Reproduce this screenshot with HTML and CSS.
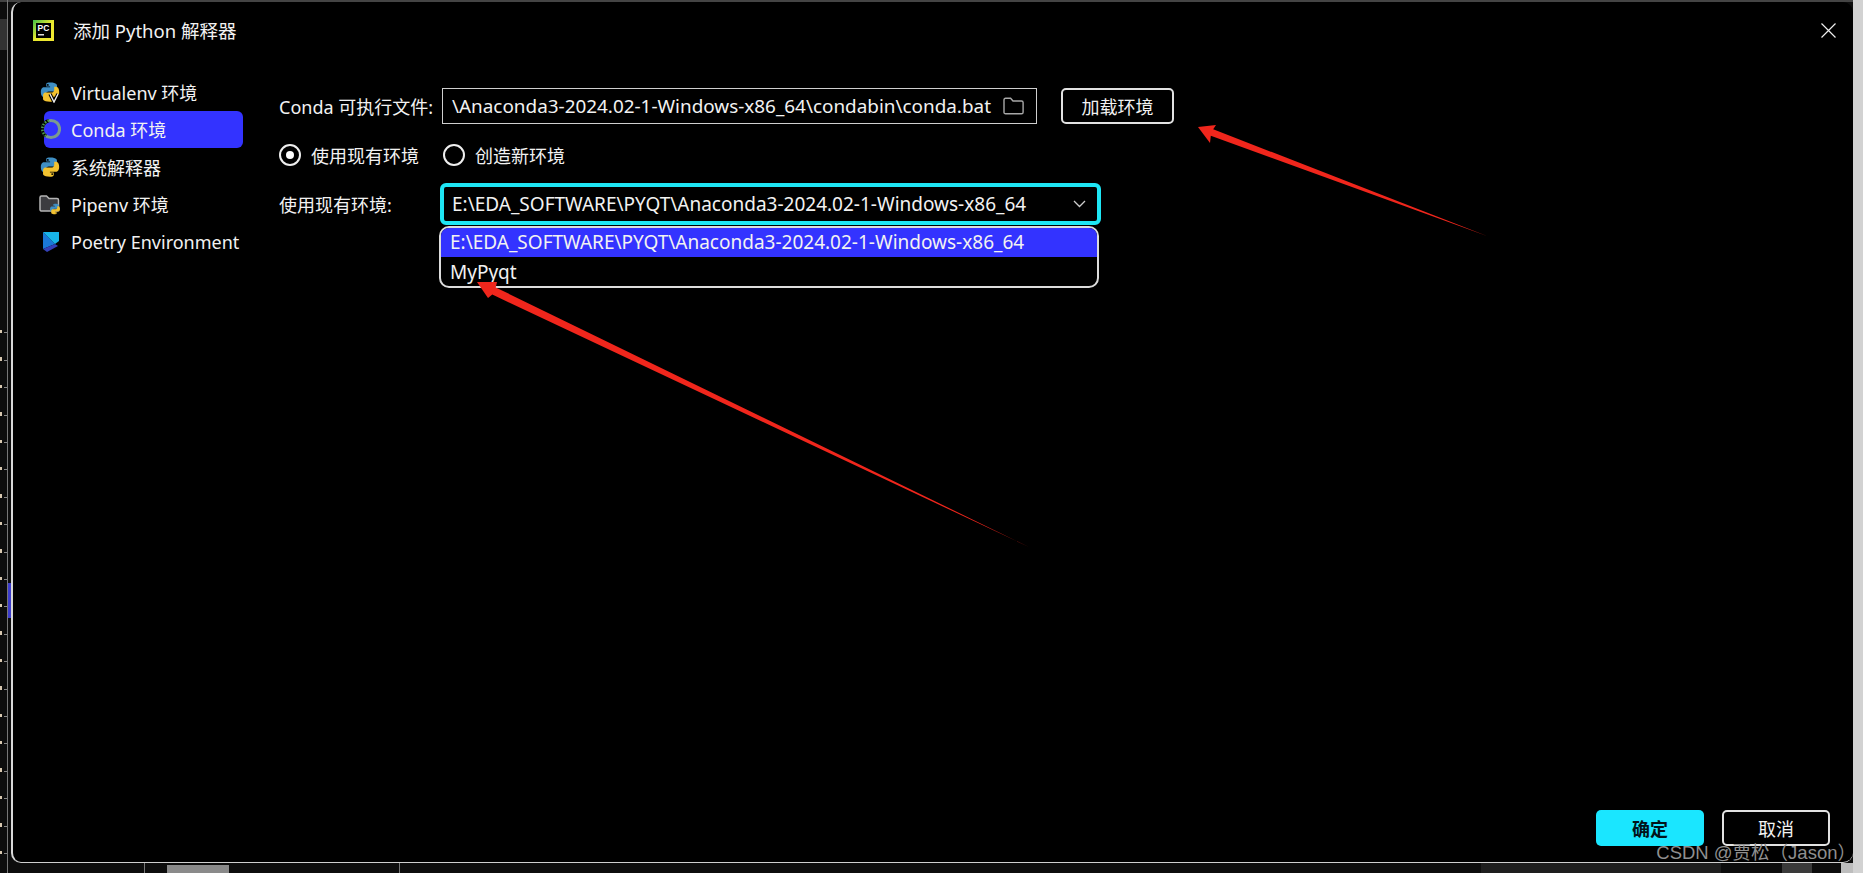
FILE: index.html
```html
<!DOCTYPE html>
<html lang="zh-CN">

<head>
  <meta charset="UTF-8">
  <title>添加 Python 解释器</title>
  <link rel="stylesheet" href="styles.css">
</head>

<body>
  <svg class="defs" width="0" height="0">
    <defs>
      <linearGradient id="pc-edge" x1="0" y1="0" x2="1" y2="1">
        <stop offset="0" stop-color="#3fbf4a" />
        <stop offset="0.5" stop-color="#e8e82e" />
        <stop offset="1" stop-color="#f2e832" />
      </linearGradient>
    </defs>
    <symbol id="py" viewBox="0 0 24 24">
      <path fill="#3f8fc4" d="M11.9 1.5C7.6 1.5 7.9 3.4 7.9 3.4V6h4.2v.8H5.9S2 6.3 2 12s3.4 5.6 3.4 5.6h2v-2.8s-.1-3.4 3.3-3.4h5.7s3.2.05 3.2-3.1V4.6s.5-3.1-7.7-3.1zM9.6 3.2a1 1 0 1 1 0 2.1 1 1 0 0 1 0-2.1z" />
      <path fill="#f2c230" d="M12.1 22.5c4.3 0 4-1.9 4-1.9V18h-4.2v-.8h6.2s3.9.5 3.9-5.2-3.4-5.6-3.4-5.6h-2v2.8s.1 3.4-3.3 3.4H7.6s-3.2-.05-3.2 3.1v3.7s-.5 3.1 7.7 3.1zm2.3-1.7a1 1 0 1 1 0-2.1 1 1 0 0 1 0 2.1z" />
    </symbol>
  </svg>

  <div class="dialog">
    <header class="title-bar">
      <div class="title">
        <svg class="app-icon" width="21" height="21" viewBox="0 0 21 21">
          <rect x="0" y="0" width="21" height="21" fill="url(#pc-edge)" />
          <rect x="3" y="3" width="15" height="15" fill="#000" />
          <text x="10.5" y="10.500" class="app-icon-text">PC</text>
          <rect x="5" y="14" width="6" height="1.500" fill="#ddd" />
        </svg>
        <span>添加 Python 解释器</span>
      </div>
      <svg class="close" width="15" height="15" viewBox="0 0 15 15">
        <path d="M.5.5l14 14M14.5.5l-14 14" stroke="#eee" stroke-width="1.2" fill="none" />
      </svg>
    </header>

    <div class="main">
      <nav class="sidebar">
        <div class="nav-item">
          <span class="nav-icon">
            <svg width="22" height="22" viewBox="0 0 22 22">
              <use href="#py" width="22" height="22" />
              <path d="M11 13l4 8 4-8" fill="none" stroke="#000" stroke-width="3.4" />
              <path d="M11 13l4 8 4-8" fill="none" stroke="#eee" stroke-width="1.4" />
            </svg>
          </span>Virtualenv 环境
        </div>
        <div class="nav-item nav-item-on">
          <span class="nav-icon">
            <svg width="22" height="22" viewBox="0 0 22 22">
              <circle cx="12" cy="11" r="8.6" fill="none" stroke="#7a9a90" stroke-width="3" />
              <path d="M10 2.6A8.6 8.6 0 0 0 7 18" fill="none" stroke="#000" stroke-width="3.2" />
              <path d="M10 2.6A8.6 8.6 0 0 0 7 18" fill="none" stroke="#4d9a4d" stroke-width="2.6" stroke-dasharray="1.6 1.4" />
            </svg>
          </span>Conda 环境
        </div>
        <div class="nav-item">
          <span class="nav-icon">
            <svg width="22" height="22" viewBox="0 0 22 22">
              <use href="#py" width="22" height="22" />
            </svg>
          </span>系统解释器
        </div>
        <div class="nav-item">
          <span class="nav-icon">
            <svg width="22" height="22" viewBox="0 0 22 22">
              <path d="M1 4.5C1 3.5 1.6 3 2.5 3h5l2.5 2.5h8c1 0 1.5.6 1.5 1.5v9.5c0 1-.5 1.5-1.5 1.5h-15C1.600 18 1 17.500 1 16.500z" fill="#3c3c40" stroke="#b4b4b4" stroke-width="1.5" />
              <use href="#py" x="10" y="10" width="12" height="12" />
            </svg>
          </span>Pipenv 环境
        </div>
        <div class="nav-item">
          <span class="nav-icon">
            <svg width="22" height="22" viewBox="0 0 22 22">
              <path d="M4 1l12 12-12 5z" fill="#1a78d8" />
              <path d="M4 1h16v9l-4 3z" fill="#18b4e8" />
              <path d="M4 18l12-5 3 2-11 6z" fill="#3340b8" />
            </svg>
          </span>Poetry Environment
        </div>
      </nav>

      <section class="form">
        <div class="row">
          <label class="field-label">Conda 可执行文件:</label>
          <div class="path-input">
            <span class="path-text">\Anaconda3-2024.02-1-Windows-x86_64\condabin\conda.bat</span>
            <svg width="21" height="18" viewBox="0 0 21 18">
              <path d="M1 3c0-1 .6-1.800 1.600-1.800h5L10 4h8.500c1 0 1.600.6 1.600 1.600v9.600c0 1-.6 1.600-1.600 1.600H2.600c-1 0-1.600-.6-1.600-1.600z" fill="none" stroke="#a8a8a8" stroke-width="1.400" />
            </svg>
          </div>
          <button class="btn btn-load" type="button">加载环境</button>
        </div>

        <div class="row radio-row">
          <span class="radio radio-on"></span><span class="radio-text">使用现有环境</span>
          <span class="radio"></span><span>创造新环境</span>
        </div>

        <div class="row combo-row">
          <label class="field-label">使用现有环境:</label>
          <div class="combo">
            <span>E:\EDA_SOFTWARE\PYQT\Anaconda3-2024.02-1-Windows-x86_64</span>
            <svg width="13" height="8" viewBox="0 0 13 8">
              <path d="M1 1l5.500 5.500L12 1" fill="none" stroke="#ccc" stroke-width="1.300" />
            </svg>
            <div class="popup">
              <div class="popup-item popup-item-on">E:\EDA_SOFTWARE\PYQT\Anaconda3-2024.02-1-Windows-x86_64</div>
              <div class="popup-item popup-item-last">MyPyqt</div>
            </div>
          </div>
        </div>
      </section>
    </div>

    <footer class="footer">
      <button class="btn btn-ok" type="button">确定</button>
      <button class="btn btn-cancel" type="button">取消</button>
    </footer>

    <span class="watermark">CSDN @贾松（Jason）</span>
  </div>

  <!-- red arrows drawn over the screenshot -->
  <svg class="arrows" width="1863" height="873" viewBox="0 0 1863 873">
    <polygon points="1198,127 1216,125 1213.200,129.200 1487,236 1210.800,135.800 1210,143" />
    <polygon points="477,282 497,282 495.700,287.400 1029,547 492.300,294.600 488,298" />
  </svg>
</body>

</html>
```

FILE: styles.css
```css
html,
body {
  height: 100%;
}

body {
  margin: 0;
  padding: 2px 10px 10px 11px;
  box-sizing: border-box;
  overflow: hidden;
  font-family: "Noto Sans", "Noto Sans CJK SC", sans-serif;
  font-size: 18px;
  color: #f2f2f2;
  background:
    linear-gradient(#3c3ccc, #3c3ccc) 8px 583px / 3px 35px no-repeat,
    linear-gradient(#777, #777) 7px 0 / 1px 100% no-repeat,
    repeating-linear-gradient(#0000 0 26.4px, #888 26.4px 27.4px) 4px 306px / 3px 567px no-repeat,
    repeating-linear-gradient(#0000 0 24px, #d8c8b0 24px 27.4px) 0 306px / 2px 567px no-repeat,
    linear-gradient(#333, #333) 0 19px / 7px 31px no-repeat,
    linear-gradient(#d2d2d2, #d2d2d2) 1853px 0 / 10px 100% no-repeat,
    linear-gradient(#bdbdbd, #bdbdbd) 1841px 863px / 22px 10px no-repeat,
    linear-gradient(#8a8a8a, #8a8a8a) 167px 865px / 62px 8px no-repeat,
    linear-gradient(#777, #777) 144px 863px / 1px 10px no-repeat,
    linear-gradient(#777, #777) 399px 863px / 1px 10px no-repeat,
    linear-gradient(#1e1e1e, #1e1e1e) 1481px 863px / 240px 10px no-repeat,
    linear-gradient(#3a3a3a, #3a3a3a) 1782px 863px / 30px 10px no-repeat,
    linear-gradient(#444, #444) 0 0 / 100% 2px no-repeat,
    #0d0d0d;
}

.defs {
  position: absolute;
}

.dialog {
  position: relative;
  display: flex;
  flex-direction: column;
  height: 100%;
  box-sizing: border-box;
  background-color: #000;
  border-left: 2px solid #d8d8d8;
  border-bottom: 1px solid #cfcfcf;
  border-radius: 10px;
}

.title-bar {
  display: flex;
  align-items: center;
  justify-content: space-between;
  height: 71px;
  padding: 0 17px 15px 20px;
  box-sizing: border-box;
}

.title {
  display: flex;
  align-items: center;
  gap: 19px;
  font-size: 18.500px;
}

.app-icon-text {
  font-family: "Liberation Sans", sans-serif;
  font-size: 8.500px;
  font-weight: bold;
  fill: #fff;
  text-anchor: middle;
}

.main {
  display: flex;
  flex: 1;
}

.sidebar {
  width: 199px;
  margin-left: 31px;
  margin-right: 36px;
}

.nav-item {
  display: flex;
  align-items: center;
  height: 37.500px;
  border-radius: 6px;
  white-space: nowrap;
}

.nav-item-on {
  background-color: #3333ff;
}

.nav-icon {
  display: flex;
  margin: 0 10px 0 -5px;
}

.form {
  padding-top: 15px;
}

.row {
  display: flex;
  align-items: center;
}

.field-label {
  width: 163px;
  white-space: nowrap;
}

.path-input {
  display: flex;
  align-items: center;
  justify-content: space-between;
  width: 595px;
  height: 36px;
  padding: 0 12px 0 9px;
  box-sizing: border-box;
  border: 1px solid #cfcfcf;
}

.path-text {
  font-size: 18.900px;
  white-space: nowrap;
}

.btn {
  font-family: inherit;
  font-size: 18px;
  color: #f2f2f2;
  background-color: #000;
  border: 2px solid #e2e2e2;
  border-radius: 5px;
  box-sizing: border-box;
}

.btn-load {
  width: 113px;
  height: 36px;
  margin-left: 24px;
}

.radio-row {
  height: 22px;
  margin-top: 20px;
}

.radio {
  display: flex;
  align-items: center;
  justify-content: center;
  width: 22px;
  height: 22px;
  box-sizing: border-box;
  margin-right: 10px;
  border: 2px solid #eee;
  border-radius: 50%;
}

.radio-on::after {
  content: "";
  width: 8px;
  height: 8px;
  border-radius: 50%;
  background-color: #fff;
}

.radio-text {
  margin-right: 24px;
}

.combo-row {
  margin-top: 17px;
}

.combo {
  position: relative;
  display: flex;
  align-items: center;
  justify-content: space-between;
  width: 661px;
  height: 42px;
  margin-left: -2px;
  padding: 0 11px 0 8px;
  box-sizing: border-box;
  border: 4px solid #1ee6f5;
  border-radius: 6px;
  font-size: 19px;
  white-space: nowrap;
}

.popup {
  position: absolute;
  top: 39px;
  left: -5px;
  width: 660px;
  height: 62px;
  box-sizing: border-box;
  border: 2px solid #dcdcdc;
  border-radius: 10px;
  overflow: hidden;
  background-color: #000;
}

.popup-item {
  height: 29px;
  line-height: 29px;
  padding-left: 9px;
}

.popup-item-last {
  line-height: 31px;
}

.popup-item-on {
  background-color: #3333ff;
}

.footer {
  display: flex;
  justify-content: flex-end;
  gap: 18px;
  padding: 0 23px 16px 0;
}

.btn-ok,
.btn-cancel {
  width: 108px;
  height: 36px;
}

.btn-ok {
  color: #02141a;
  font-weight: bold;
  background-color: #1ae6ff;
  border: none;
}

.watermark {
  position: absolute;
  right: -3px;
  bottom: -2px;
  font-family: "Liberation Sans", "Noto Sans CJK SC", sans-serif;
  font-size: 18.500px;
  color: #8f8f8f;
  white-space: nowrap;
}

.arrows {
  position: absolute;
  top: 0;
  left: 0;
  pointer-events: none;
}

.arrows polygon {
  fill: #f0261c;
}
```
